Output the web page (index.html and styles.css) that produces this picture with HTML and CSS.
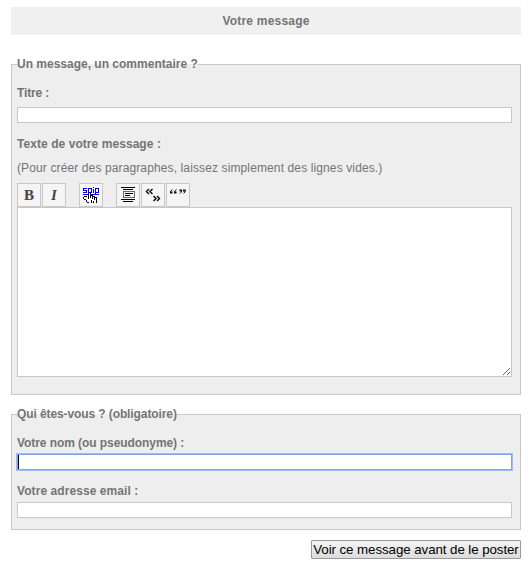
FILE: index.html
```html
<!DOCTYPE html>
<html lang="fr">
<head>
<meta charset="utf-8">
<title>Votre message</title>
<link rel="stylesheet" href="styles.css">
</head>
<body>
<h1 class="heading">Votre message</h1>
<form class="form">
  <fieldset class="group group-message">
    <legend>Un message, un commentaire ?</legend>
    <label class="label label-title" for="titre">Titre :</label>
    <input class="field" id="titre" type="text">
    <label class="label label-text" for="texte">Texte de votre message :</label>
    <p class="hint">(Pour créer des paragraphes, laissez simplement des lignes vides.)</p>
    <div class="toolbar">
      <span class="tool"><b class="glyph">B</b></span>
      <span class="tool"><i class="glyph">I</i></span>
      <span class="tool tool-gap">
        <svg width="18" height="18" viewBox="0 0 18 18" shape-rendering="crispEdges">
          <path d="M5 2.500H1.500V4.500H4.500V6.500H1M6.500 9V2.500H9.500V6.500H7M11.500 3V7M11 1.500H12M13.500 9V2.500H16.500V6.500H14M1 8.500H17" fill="none" stroke="#0000f0"/>
          <path d="M6 7H8V10H13V11H15V17H7V15H5V12H6Z" fill="#fff"/>
          <path d="M6.500 7V13M8.500 7V12M7 6.500H8M9 9.500H11M10.500 10V13M11 10.500H13M12.500 11V14M13 11.500H15M14.500 12V17M2 10.500H5M1.500 11V13M2 13.500H4M4.500 14V16M5 16.500H7M9.500 14V17M11.500 15V17" fill="none" stroke="#000"/>
        </svg>
      </span>
      <span class="tool tool-gap">
        <svg width="18" height="18" viewBox="0 0 18 18" shape-rendering="crispEdges">
          <path d="M2 1.500H16M4 3.500H14M2 13.500H16M4 15.500H14M6 7.500H14M6 9.500H11" stroke="#000"/>
          <rect x="4.500" y="5.500" width="11" height="6" fill="none" stroke="#666"/>
        </svg>
      </span>
      <span class="tool">
        <svg width="18" height="18" viewBox="0 0 18 18">
          <path d="M5 3L2.500 5.500L5 8M8.500 3L6 5.500L8.500 8M9.500 10L12 12.500L9.500 15M13 10L15.500 12.500L13 15" fill="none" stroke="#111" stroke-width="1.500"/>
        </svg>
      </span>
      <span class="tool">
        <svg width="18" height="18" viewBox="0 0 18 18">
          <path d="M3.500 3.500Q1 4.500 1.500 7M7.500 3.500Q5 4.500 5.500 7M12.500 4Q13.500 6 11 7.500M16 4Q17 6 14.500 7.500" fill="none" stroke="#111"/>
          <path d="M1 5.500H3.500V7.500H1ZM5 5.500H7.500V7.500H5ZM10.500 3.500H13V5.500H10.500ZM14 3.500H16.500V5.500H14Z" fill="#111"/>
        </svg>
      </span>
    </div>
    <textarea class="area" id="texte"></textarea>
  </fieldset>
  <fieldset class="group group-author">
    <legend>Qui êtes-vous ? (obligatoire)</legend>
    <label class="label label-name" for="nom">Votre nom (ou pseudonyme) :</label>
    <div class="field field-active" id="nom" role="textbox" tabindex="0"><span class="caret"></span></div>
    <label class="label label-email" for="email">Votre adresse email :</label>
    <input class="field" id="email" type="text">
  </fieldset>
  <div class="actions"><button class="submit" type="button">Voir ce message avant de le poster</button></div>
</form>
</body>
</html>
```
FILE: styles.css
```css
* { box-sizing: border-box; }
body {
  margin: 0;
  padding: 7px 11px 0;
  background: #fff;
  color: #747474;
  font: 12px/14px "Liberation Sans", Arial, sans-serif;
}
.heading {
  height: 28px;
  margin: 0 0 22px;
  background: #f0f0f0;
  font-size: 12px;
  line-height: 28px;
  letter-spacing: 0.2px;
  text-align: center;
}
.group {
  min-width: 0;
  margin: 0;
  padding: 0 8px 0 5px;
  border: 1px solid #c8c8c8;
  background: #eee;
}
.group-message { height: 338px; }
.group-author { height: 123px; margin-top: 12px; }
legend { padding: 0; height: 14px; font-weight: bold; }
.group-author legend { letter-spacing: -0.1px; }
.label { display: block; margin-top: 15px; font-weight: bold; }
.label-title { letter-spacing: -0.15px; }
.label-name { letter-spacing: -0.07px; }
.field {
  display: block;
  width: 100%;
  height: 16px;
  margin: 7px 0 0;
  padding: 0 1px;
  border: 1px solid #c8c8c8;
  border-radius: 0;
  background: #fff;
  outline: none;
}
.label-text { margin-top: 14px; letter-spacing: 0.06px; }
.hint { margin: 10px 0 0; letter-spacing: 0.12px; }
.toolbar { display: flex; gap: 1px; height: 24px; margin-top: 8px; }
.tool {
  display: flex;
  align-items: center;
  justify-content: center;
  width: 24px;
  height: 24px;
  border: 1px solid #c8c8c8;
  background: #f5f5f5;
}
.tool-gap { margin-left: 12px; }
.glyph { color: #444; font: bold 15px/20px "Liberation Serif", serif; }
i.glyph { font-style: italic; }
.area {
  display: block;
  width: 100%;
  height: 170px;
  margin: 0;
  padding: 2px;
  border: 1px solid #c8c8c8;
  border-radius: 0;
  background: #fff;
  outline: none;
  resize: both;
}
.field-active {
  margin-top: 4px;
  padding: 0;
  border-color: #7fa4e4;
  box-shadow: 0 0 0 1px #9dbdf2;
}
.caret { display: block; width: 1px; height: 14px; background: #000; }
.label-email { margin-top: 14px; letter-spacing: 0.07px; }
.label-email + .field { margin-top: 4px; }
.actions { display: flex; justify-content: flex-end; margin-top: 10px; }
.submit {
  width: 210px;
  height: 19px;
  padding: 0;
  border: 1px solid #999;
  border-radius: 1px;
  background: linear-gradient(#f4f4f4, #dcdcdc);
  color: #000;
  font: 13.333px/15px "Liberation Sans", Arial, sans-serif;
  letter-spacing: -0.08px;
  white-space: nowrap;
}
```
